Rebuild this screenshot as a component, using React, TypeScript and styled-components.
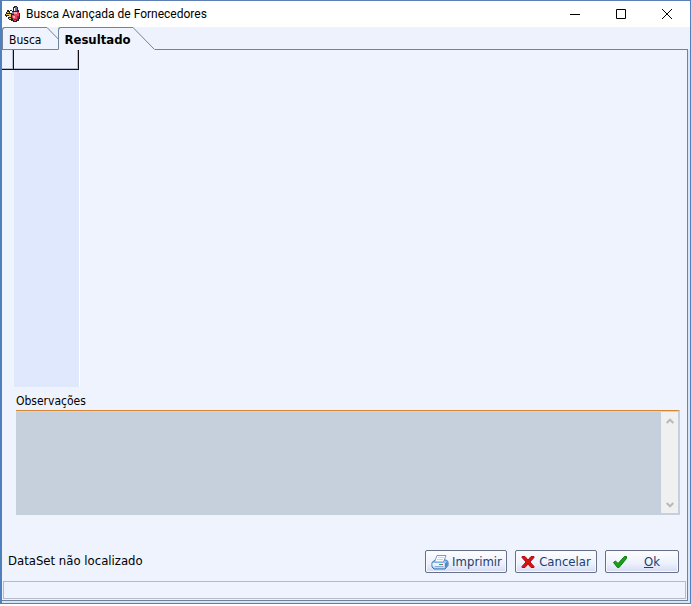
import React from "react";
import styled, { createGlobalStyle, css } from "styled-components";

const GlobalStyle = createGlobalStyle`
  * { box-sizing: border-box; }
  body { margin: 0; background: #fff; }
  button, textarea { font: inherit; color: inherit; }
`;

const ui = `"DejaVu Sans Condensed", "DejaVu Sans", sans-serif`;
const line = "#71839b";

const Window = styled.main`
  display: flex;
  flex-direction: column;
  height: calc(100vh - 2px);
  min-height: 400px;
  border: 1px solid #4f7fbd;
  border-left-width: 2px;
  border-top-color: #5f7fb2;
  background: #edf2fc;
  font: 12px/16px ${ui};
  color: #000;
`;

const TitleBar = styled.header`
  display: flex;
  align-items: center;
  height: 26px;
  flex: none;
  padding-left: 3px;
  background: #fff;
`;

const Title = styled.h1`
  flex: 1;
  margin: 0 0 0 5px;
  font: 12px/16px Roboto, "Open Sans", sans-serif;
`;

const WindowButton = styled.button`
  display: grid;
  place-items: center;
  width: 46px;
  height: 26px;
  padding: 0;
  border: 0;
  background: none;
`;

const Tabs = styled.div`
  display: flex;
  flex: none;
  height: 23px;
`;

const Tab = styled.button<{ $active?: boolean }>`
  display: flex;
  flex: none;
  height: 23px;
  padding: 0;
  border: 0;
  background: none;
  ${(p) =>
    p.$active
      ? css`font-weight: bold; z-index: 1;`
      : css`margin-right: -11px;`}
`;

const TabLabel = styled.span<{ $active?: boolean }>`
  display: block;
  height: 23px;
  padding: 4px ${(p) => (p.$active ? 2 : 6)}px 0 ${(p) => (p.$active ? 5 : 6)}px;
  border: 1px solid ${line};
  border-right: 0;
  border-bottom-color: ${(p) => (p.$active ? "#eef3fe" : line)};
  border-radius: 3px 0 0 0;
  background: #eef3fe;
  font-size: ${(p) => (p.$active ? 13 : 12)}px;
`;

const TabFill = styled.div`
  flex: 1;
  margin-right: 2px;
  border-bottom: 1px solid ${line};
`;

const PanelFrame = styled.div`
  display: flex;
  flex: 1;
  min-height: 0;
  padding: 0 2px 2px 0;
  background: #d9e5f7;
`;

const Panel = styled.section`
  display: flex;
  flex: 1;
  flex-direction: column;
  min-width: 0;
  border-right: 1px solid ${line};
  border-bottom: 1px solid ${line};
  background: #eef3fe;
`;

const Grid = styled.table`
  flex: 1;
  display: grid;
  grid-template-rows: 20px 1fr;
  width: 78px;
  min-height: 0;
  thead, tbody { display: grid; }
  tr { display: grid; grid-template-columns: 12px 66px; }
`;

const HeaderCell = styled.th`
  padding: 0;
  border-right: 1px solid #111;
  border-bottom: 1px solid #111;
  box-shadow: inset -1px -1px #b5bccb;
  &:last-child { width: 65px; }
`;

const GridCell = styled.td<{ $column?: boolean }>`
  padding: 0;
  ${(p) => p.$column && css`background: #dfe8fd; border-right: 1px solid #fff;`}
`;

const Field = styled.div`
  flex: none;
  margin: 6px 7px 0 14px;
`;

const Label = styled.label`
  display: block;
  height: 17px;
`;

const MemoBox = styled.div`
  display: flex;
  height: 105px;
  border-top: 1px solid #d48634;
  border-right: 2px solid #c5d0dc;
  border-bottom: 2px solid #c5d0dc;
  background: #c5d0dc;
  box-shadow: inset 0 1px #edcfa9;
`;

const Memo = styled.textarea`
  flex: 1;
  min-width: 0;
  padding: 3px;
  border: 0;
  outline: 0;
  resize: none;
  overflow: hidden;
  background: transparent;
`;

const ScrollRail = styled.div`
  display: flex;
  flex-direction: column;
  justify-content: space-between;
  width: 17px;
  margin-top: 1px;
  background: #f0f0f0;
`;

const ScrollButton = styled.button`
  display: grid;
  place-items: center;
  width: 17px;
  height: 17px;
  padding: 0;
  border: 0;
  background: none;
`;

const Footer = styled.footer`
  display: flex;
  flex: none;
  align-items: center;
  gap: 8px;
  margin: 35px 8px 8px 6px;
`;

const Message = styled.span`
  flex: 1;
  padding-bottom: 2px;
  font-size: 13px;
`;

const ActionButton = styled.button<{ $small?: boolean }>`
  display: flex;
  align-items: center;
  width: ${(p) => (p.$small ? 74 : 82)}px;
  height: 23px;
  padding: 0 4px 0 ${(p) => (p.$small ? 7 : 5)}px;
  border: 1px solid #667089;
  border-radius: 2px;
  background: linear-gradient(#fdfdff, #edf1fc 60%, #d4dcf3);
  box-shadow: inset 0 0 0 1px #f9faff;
  color: #23406e;
  line-height: 16px;
  font-size: 13px;
`;

const ActionText = styled.span`
  flex: 1;
  margin-left: 3px;
  text-align: center;
`;

const StatusBar = styled.div`
  flex: none;
  height: 18px;
  margin: 0 1px 1px;
  border: 1px solid #b5bac7;
`;

const Slant = ({ active }: { active?: boolean }) => (
  <svg width="22" height="23" viewBox="0 0 22 23" aria-hidden="true">
    <path d="M0 0L22 22.5V23H0z" fill="#eef3fe" />
    <path d="M0 .5L21.5 22.5" stroke={line} fill="none" />
    {!active && <path d="M0 22.5H22" stroke={line} />}
  </svg>
);

const AppIcon = () => (
  <svg width="16" height="17" viewBox="0 0 16 17" shapeRendering="crispEdges" aria-hidden="true">
    <path d="M9 0h3v1h1v3h1v3h1v6h-1v2h-2v1H8v-1H6v-1H4v-1H3v-2H1v-1H0V8h1V6h1V4h2v1h1V4h2v1h1V1h1z" fill="#262028" />
    <path d="M9 2h1v3H9zM5 5h2v2H5zM2 10h2v1H2z" fill="#fff" />
    <path d="M10 1h2v4h-2zM7 6h2v2H7z" fill="#6970ac" />
    <path d="M2 6h2v1H2zM1 8h3v1H1zM4 8h2v3H4zM4 12h2v1H4z" fill="#e7c952" />
    <path d="M9 6h5v6h-1v2h-2v1H9v-1H8v-2H7V9h2z" fill="#e6435b" />
    <path d="M9 6h3v2H9zM8 10h2v2H8z" fill="#f7a9b3" />
    <path d="M12 10h2v2h-1v2H9v-1h3z" fill="#a51d38" />
  </svg>
);

const PrinterIcon = () => (
  <svg width="18" height="16" viewBox="0 0 18 16" aria-hidden="true">
    <path d="M1 8.5L4 6h11l2 1.5v4L14 15H3l-2-2z" fill="#9bc5ef" stroke="#3b73b4" />
    <path d="M6 1.5h9L12.5 8H3.5z" fill="#fff" stroke="#6c9dd3" />
    <path d="M7 3.5h6M6 5.5h6" stroke="#c2d5eb" />
    <path d="M1.5 9h12v4.5h-10l-2-1.5z" fill="#e9f4ff" />
    <path d="M14 9.5l2.5-2v4L14 14z" fill="#418bd0" />
    <path d="M3.5 12.5h9" stroke="#86addb" />
    <path d="M8 10.5h2" stroke="#36a66b" />
    <path d="M10 10.5h2" stroke="#cf4e4e" />
  </svg>
);

const CancelIcon = () => (
  <svg width="14" height="12" viewBox="0 0 14 12" aria-hidden="true">
    <path d="M1 .5h3L7 4l3-3.5h3v1L9 6l4 4.5v1h-3L7 8l-3 3.5H1v-1L5 6 1 1.5z" fill="#cf1515" stroke="#b80c0c" />
  </svg>
);

const CheckIcon = () => (
  <svg width="14" height="12" viewBox="0 0 14 12" aria-hidden="true">
    <path d="M.5 6.5L2.5 5 5 7.5 11.5.5h2v2L6 11.5H4.5z" fill="#14a414" stroke="#087808" />
  </svg>
);

const Chevron = ({ down }: { down?: boolean }) => (
  <svg width="8" height="6" viewBox="0 0 8 6" aria-hidden="true">
    <path d={down ? "M.7 1L4 4.3 7.3 1" : "M.7 5L4 1.7 7.3 5"} fill="none" stroke="#b9b9b9" strokeWidth="2" />
  </svg>
);

export default function App() {
  return (
    <>
      <GlobalStyle />
      <Window>
        <TitleBar>
          <AppIcon />
          <Title>Busca Avançada de Fornecedores</Title>
          <WindowButton aria-label="Minimizar">
            <svg width="10" height="11"><path d="M0 5.5h10" stroke="#000" /></svg>
          </WindowButton>
          <WindowButton aria-label="Maximizar">
            <svg width="10" height="10"><path d="M.5.5h9v9h-9z" fill="none" stroke="#000" /></svg>
          </WindowButton>
          <WindowButton aria-label="Fechar">
            <svg width="10" height="10"><path d="M0 0l10 10M10 0L0 10" stroke="#000" /></svg>
          </WindowButton>
        </TitleBar>
        <Tabs role="tablist">
          <Tab role="tab" aria-selected={false}>
            <TabLabel>Busca</TabLabel>
            <Slant />
          </Tab>
          <Tab $active role="tab" aria-selected>
            <TabLabel $active>Resultado</TabLabel>
            <Slant active />
          </Tab>
          <TabFill />
        </Tabs>
        <PanelFrame>
          <Panel role="tabpanel">
            <Grid>
              <thead><tr><HeaderCell /><HeaderCell /></tr></thead>
              <tbody><tr><GridCell /><GridCell $column /></tr></tbody>
            </Grid>
            <Field>
              <Label htmlFor="obs">Observações</Label>
              <MemoBox>
                <Memo id="obs" readOnly />
                <ScrollRail>
                  <ScrollButton aria-label="Rolar para cima"><Chevron /></ScrollButton>
                  <ScrollButton aria-label="Rolar para baixo"><Chevron down /></ScrollButton>
                </ScrollRail>
              </MemoBox>
            </Field>
            <Footer>
              <Message>DataSet não localizado</Message>
              <ActionButton><PrinterIcon /><ActionText>Imprimir</ActionText></ActionButton>
              <ActionButton><CancelIcon /><ActionText>Cancelar</ActionText></ActionButton>
              <ActionButton $small><CheckIcon /><ActionText><u>O</u>k</ActionText></ActionButton>
            </Footer>
            <StatusBar role="status" />
          </Panel>
        </PanelFrame>
      </Window>
    </>
  );
}
